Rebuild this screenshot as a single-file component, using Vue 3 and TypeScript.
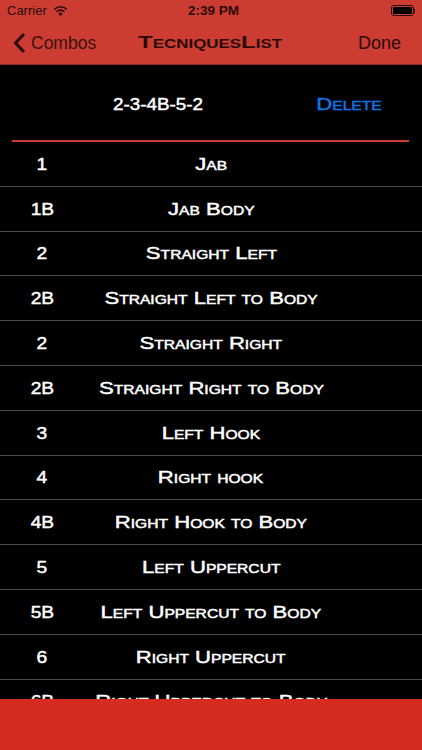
<script setup lang="ts">
const rows: [string, string][] = [
  ['1', 'Jab'],
  ['1B', 'Jab Body'],
  ['2', 'Straight Left'],
  ['2B', 'Straight Left to Body'],
  ['2', 'Straight Right'],
  ['2B', 'Straight Right to Body'],
  ['3', 'Left Hook'],
  ['4', 'Right hook'],
  ['4B', 'Right Hook to Body'],
  ['5', 'Left Uppercut'],
  ['5B', 'Left Uppercut to Body'],
  ['6', 'Right Uppercut'],
  ['6B', 'Right Uppercut to Body'],
]
</script>

<template>
  <div class="screen">
    <header class="top">
      <div class="status">
        <div class="status-left">
          <span>Carrier</span>
          <svg width="15" height="12" viewBox="0 0 16 12" class="wifi">
            <path d="M8 11.5 5.6 8.7a3.4 3.4 0 0 1 4.8 0Z" fill="#2a0a08" />
            <path d="M3.8 6.8a6 6 0 0 1 8.4 0" stroke="#2a0a08" stroke-width="1.7" fill="none" />
            <path d="M1.4 4.2a9.4 9.4 0 0 1 13.2 0" stroke="#2a0a08" stroke-width="1.7" fill="none" />
          </svg>
        </div>
        <span class="clock">2:39 PM</span>
        <div class="battery-wrap">
          <div class="battery"><i></i></div>
          <b class="nub"></b>
        </div>
      </div>
      <nav class="nav">
        <div class="back">
          <svg width="13" height="22" viewBox="0 0 13 22">
            <path d="M11 2 2.5 11 11 20" fill="none" stroke="#2a0a08" stroke-width="3" />
          </svg>
          <span>Combos</span>
        </div>
        <strong class="title wide">TecniquesList</strong>
        <span class="done">Done</span>
      </nav>
    </header>

    <section class="combo">
      <span class="combo-name wide">2-3-4B-5-2</span>
      <span class="delete wide">Delete</span>
    </section>
    <div class="rule"></div>

    <main class="list">
      <div v-for="(r, i) in rows" :key="i" class="row">
        <span class="code"><span class="wide digit">{{ r[0] }}</span></span>
        <span class="name"><span class="wide">{{ r[1] }}</span></span>
      </div>
    </main>

    <footer class="bottom"></footer>
  </div>
</template>

<style scoped>
.screen {
  width: 422px;
  height: 750px;
  background: #000;
  display: flex;
  flex-direction: column;
  overflow: hidden;
  position: relative;
  font-family: "Liberation Sans", sans-serif;
  color: #fff;
}
.wide {
  display: inline-block;
  font-family: "Liberation Sans", sans-serif;
  font-variant: small-caps;
  font-weight: normal;
  -webkit-text-stroke: 0.45px currentColor;
  font-size: 17px;
  white-space: nowrap;
  transform: scaleX(1.3);
  transform-origin: center;
}
.digit {
  transform: scaleX(1.13);
}
.top {
  background: #cc3c32;
  height: 65px;
  flex: none;
  color: #2a0a08;
  border-bottom: 1px solid #8c2a24;
  box-sizing: border-box;
}
.status {
  height: 21px;
  display: grid;
  grid-template-columns: 1fr auto 1fr;
  align-items: center;
  padding: 0 7px;
  font-size: 13px;
}
.status-left {
  display: flex;
  align-items: center;
  gap: 6px;
}
.clock {
  font-weight: 600;
  font-size: 13.5px;
  margin-left: 5px;
}
.battery-wrap {
  justify-self: end;
  display: flex;
  align-items: center;
}
.battery {
  width: 23px;
  height: 11px;
  border: 1px solid #2a0a08;
  border-radius: 3px;
  padding: 1px;
  box-sizing: border-box;
}
.battery i {
  display: block;
  height: 100%;
  background: #000;
  border-radius: 1px;
}
.nub {
  width: 1px;
  height: 4px;
  background: #2a0a08;
}
.nav {
  height: 44px;
  display: grid;
  grid-template-columns: 1fr auto 1fr;
  align-items: center;
  padding: 0 21px 0 13px;
  font-size: 17.5px;
}
.back {
  display: flex;
  align-items: center;
  gap: 5px;
  color: #3a120e;
}
.done {
  justify-self: end;
  font-size: 18px;
  color: #2a0a08;
}
.title {
  color: #2a0a08;
  font-weight: bold;
  -webkit-text-stroke: 0;
  transform: translateX(3px) scaleX(1.41);
}
.combo {
  height: 75px;
  flex: none;
  box-sizing: border-box;
  display: flex;
  align-items: center;
  justify-content: space-between;
  padding: 5px 40px 0 113px;
}
.combo-name {
  width: 90px;
  text-align: center;
  transform: scaleX(1.105);
}
.delete {
  width: 66px;
  text-align: center;
  color: #1273e6;
}
.rule {
  flex: none;
  height: 2px;
  margin: 0 13px 0 12px;
  background: #cc3c32;
}
.list {
  flex: 1;
  min-height: 0;
}
.row {
  height: 44.8px;
  box-sizing: border-box;
  border-bottom: 1px solid #48484c;
  display: grid;
  grid-template-columns: 84px 1fr 84px;
  align-items: center;
  padding-top: 2px;
}
.code {
  text-align: center;
}
.name {
  text-align: center;
  white-space: nowrap;
}
.bottom {
  position: absolute;
  left: 0;
  right: 0;
  bottom: 0;
  height: 51px;
  background: #d62b1f;
}
</style>
